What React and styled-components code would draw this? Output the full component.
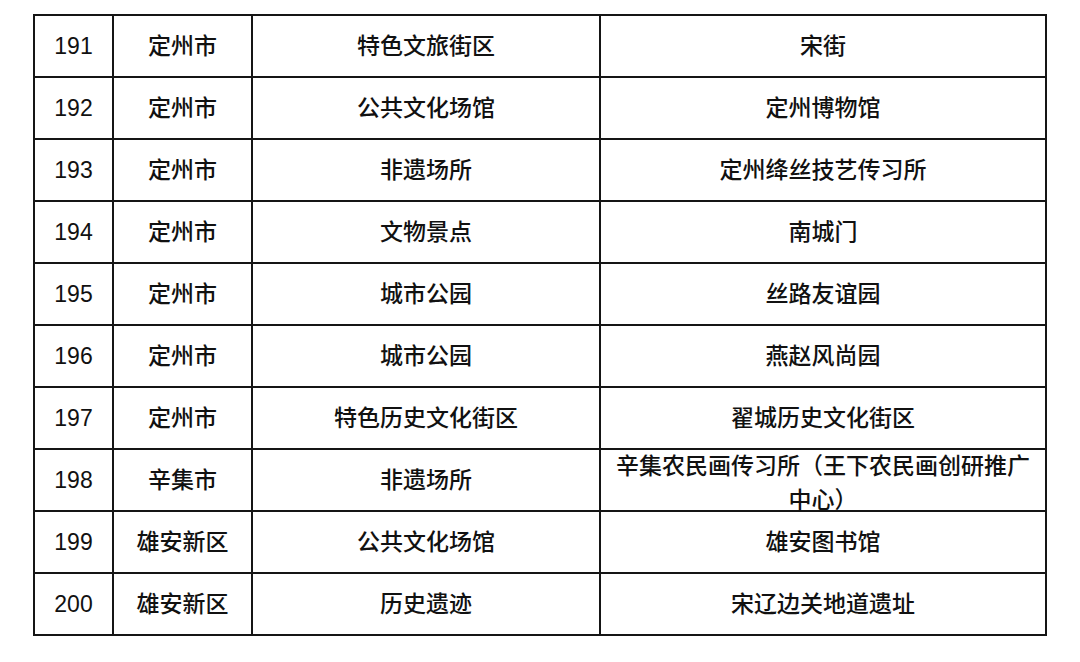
import React from 'react';
import styled, { createGlobalStyle } from 'styled-components';

const GlobalStyle = createGlobalStyle`
  html, body {
    margin: 0;
    padding: 0;
    background: #ffffff;
  }
  body {
    font-family: "Liberation Sans", "Noto Sans CJK SC", sans-serif;
    color: #111111;
  }
  * {
    box-sizing: border-box;
  }
`;

const Page = styled.div`
  padding: 14px 0 0 33px;
`;

const Table = styled.div`
  display: grid;
  grid-template-columns: 79px 139px 348px 446px;
  grid-auto-rows: 62px;
  width: 1012px;
  border-top: 2px solid #151515;
  border-left: 2px solid #151515;
  box-sizing: content-box;
`;

const Cell = styled.div`
  display: flex;
  align-items: center;
  justify-content: center;
  text-align: center;
  padding: ${(p) => (p.$wrap ? '6px 12px 0' : '0 12px')};
  border-right: 2px solid #151515;
  border-bottom: 2px solid #151515;
  font-size: 23px;
  line-height: 34px;
  font-weight: ${(p) => (p.$num ? 400 : 500)};
  color: #111111;
  font-family: "Liberation Sans", "Noto Sans CJK SC", sans-serif;
`;

const rows = [
  ['191', '定州市', '特色文旅街区', '宋街'],
  ['192', '定州市', '公共文化场馆', '定州博物馆'],
  ['193', '定州市', '非遗场所', '定州绛丝技艺传习所'],
  ['194', '定州市', '文物景点', '南城门'],
  ['195', '定州市', '城市公园', '丝路友谊园'],
  ['196', '定州市', '城市公园', '燕赵风尚园'],
  ['197', '定州市', '特色历史文化街区', '翟城历史文化街区'],
  ['198', '辛集市', '非遗场所', '辛集农民画传习所（王下农民画创研推广中心）'],
  ['199', '雄安新区', '公共文化场馆', '雄安图书馆'],
  ['200', '雄安新区', '历史遗迹', '宋辽边关地道遗址'],
];

export default function App() {
  return (
    <Page>
      <GlobalStyle />
      <Table>
        {rows.map((r) => (
          <React.Fragment key={r[0]}>
            <Cell $num>{r[0]}</Cell>
            <Cell>{r[1]}</Cell>
            <Cell>{r[2]}</Cell>
            <Cell $wrap={r[3].length > 18}>{r[3]}</Cell>
          </React.Fragment>
        ))}
      </Table>
    </Page>
  );
}
